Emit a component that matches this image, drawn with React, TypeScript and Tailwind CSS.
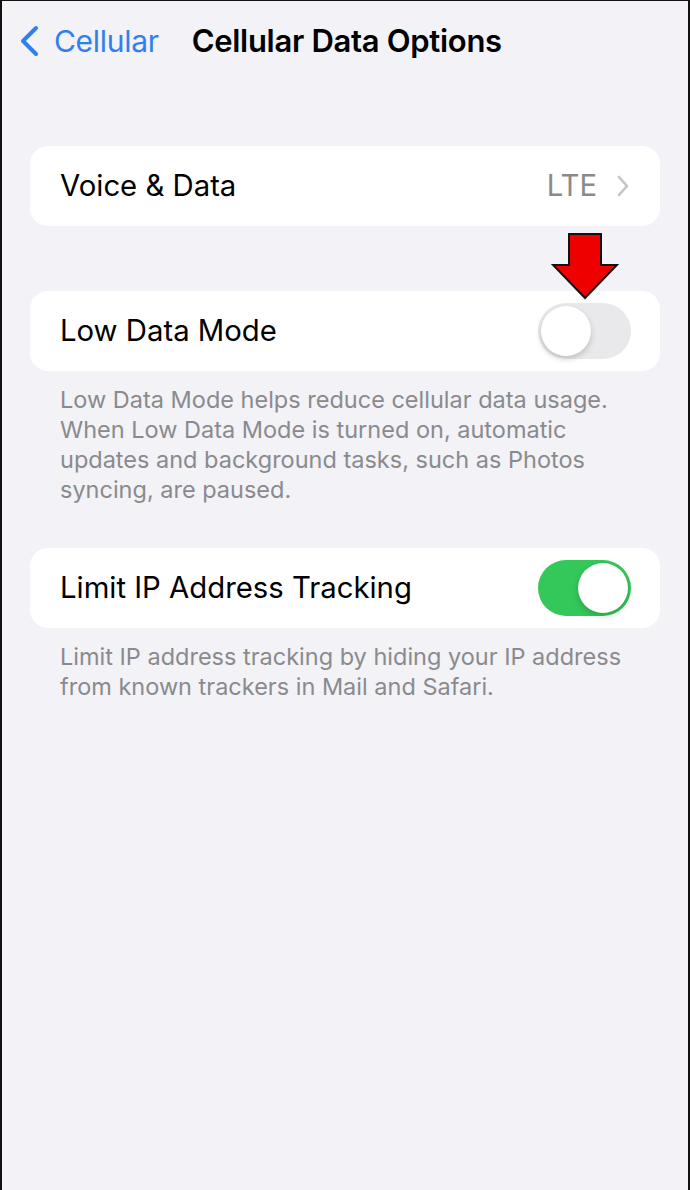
function Toggle({ on }: { on: boolean }) {
  return (
    <div
      className={`relative w-[93px] h-[56px] rounded-full ${on ? "bg-[#34c759]" : "bg-[#e9e9eb]"}`}
    >
      <div
        className={`absolute top-[3px] w-[50px] h-[50px] rounded-full bg-white shadow-[0_3px_6px_rgba(0,0,0,0.18)] ${
          on ? "right-[3px]" : "left-[3px]"
        }`}
      />
    </div>
  );
}

function Card({ children }: { children: React.ReactNode }) {
  return (
    <div className="ml-[28px] mr-[28px] h-[80px] rounded-[18px] bg-white flex items-center pl-[30px] pr-[29px]">
      {children}
    </div>
  );
}

function Footnote({ children }: { children: React.ReactNode }) {
  return (
    <p className="px-[58px] pt-[14px] text-[23.5px] leading-[30px] text-[#8a8a8e]">{children}</p>
  );
}

export default function App() {
  return (
    <div
      className="w-[690px] h-[1190px] bg-[#f2f2f7] border-l-2 border-r-2 border-t border-[#111] overflow-hidden"
      style={{ fontFamily: "Inter, 'Noto Sans', sans-serif" }}
    >
      {/* nav bar */}
      <div className="h-[80px] flex items-center pl-[16px]">
        <div className="flex items-center text-[#2f7ff0]">
          <svg width="22" height="32" viewBox="0 0 22 32" fill="none">
            <polyline
              points="18,3 5,16 18,29"
              stroke="currentColor"
              strokeWidth="4"
              strokeLinecap="round"
              strokeLinejoin="round"
            />
          </svg>
          <span className="ml-[14px] text-[30px] tracking-[-0.3px]">Cellular</span>
        </div>
        <span className="ml-[33px] text-[31px] font-semibold tracking-[-0.3px] text-black">
          Cellular Data Options
        </span>
      </div>

      <div className="pt-[65px]">
        <Card>
          <span className="flex-1 text-[29.3px] text-black">Voice &amp; Data</span>
          <span className="text-[29.3px] text-[#8a8a8e]">LTE</span>
          <svg className="ml-[20px] mr-[2px]" width="12" height="22" viewBox="0 0 12 22" fill="none">
            <polyline
              points="2,2 10,11 2,20"
              stroke="#c4c4c7"
              strokeWidth="2.6"
              strokeLinecap="round"
              strokeLinejoin="round"
            />
          </svg>
        </Card>
      </div>

      <div className="relative pt-[65px]">
        {/* red pointer arrow drawn over the row */}
        <svg
          className="absolute left-[549px] top-[6px]"
          width="68"
          height="68"
          viewBox="0 0 68 68"
        >
          <polygon
            points="18,2 50,2 50,33 66,33 34,66 2,33 18,33"
            fill="#ee0000"
            stroke="#111"
            strokeWidth="2"
            strokeLinejoin="miter"
          />
        </svg>
        <Card>
          <span className="flex-1 text-[29.3px] text-black">Low Data Mode</span>
          <Toggle on={false} />
        </Card>
      </div>
      <Footnote>
        Low Data Mode helps reduce cellular data usage. When Low Data Mode is turned on, automatic
        updates and background tasks, such as Photos syncing, are paused.
      </Footnote>

      <div className="pt-[43px]">
        <Card>
          <span className="flex-1 text-[29.3px] text-black">Limit IP Address Tracking</span>
          <Toggle on={true} />
        </Card>
      </div>
      <Footnote>
        Limit IP address tracking by hiding your IP address from known trackers in Mail and Safari.
      </Footnote>
    </div>
  );
}
